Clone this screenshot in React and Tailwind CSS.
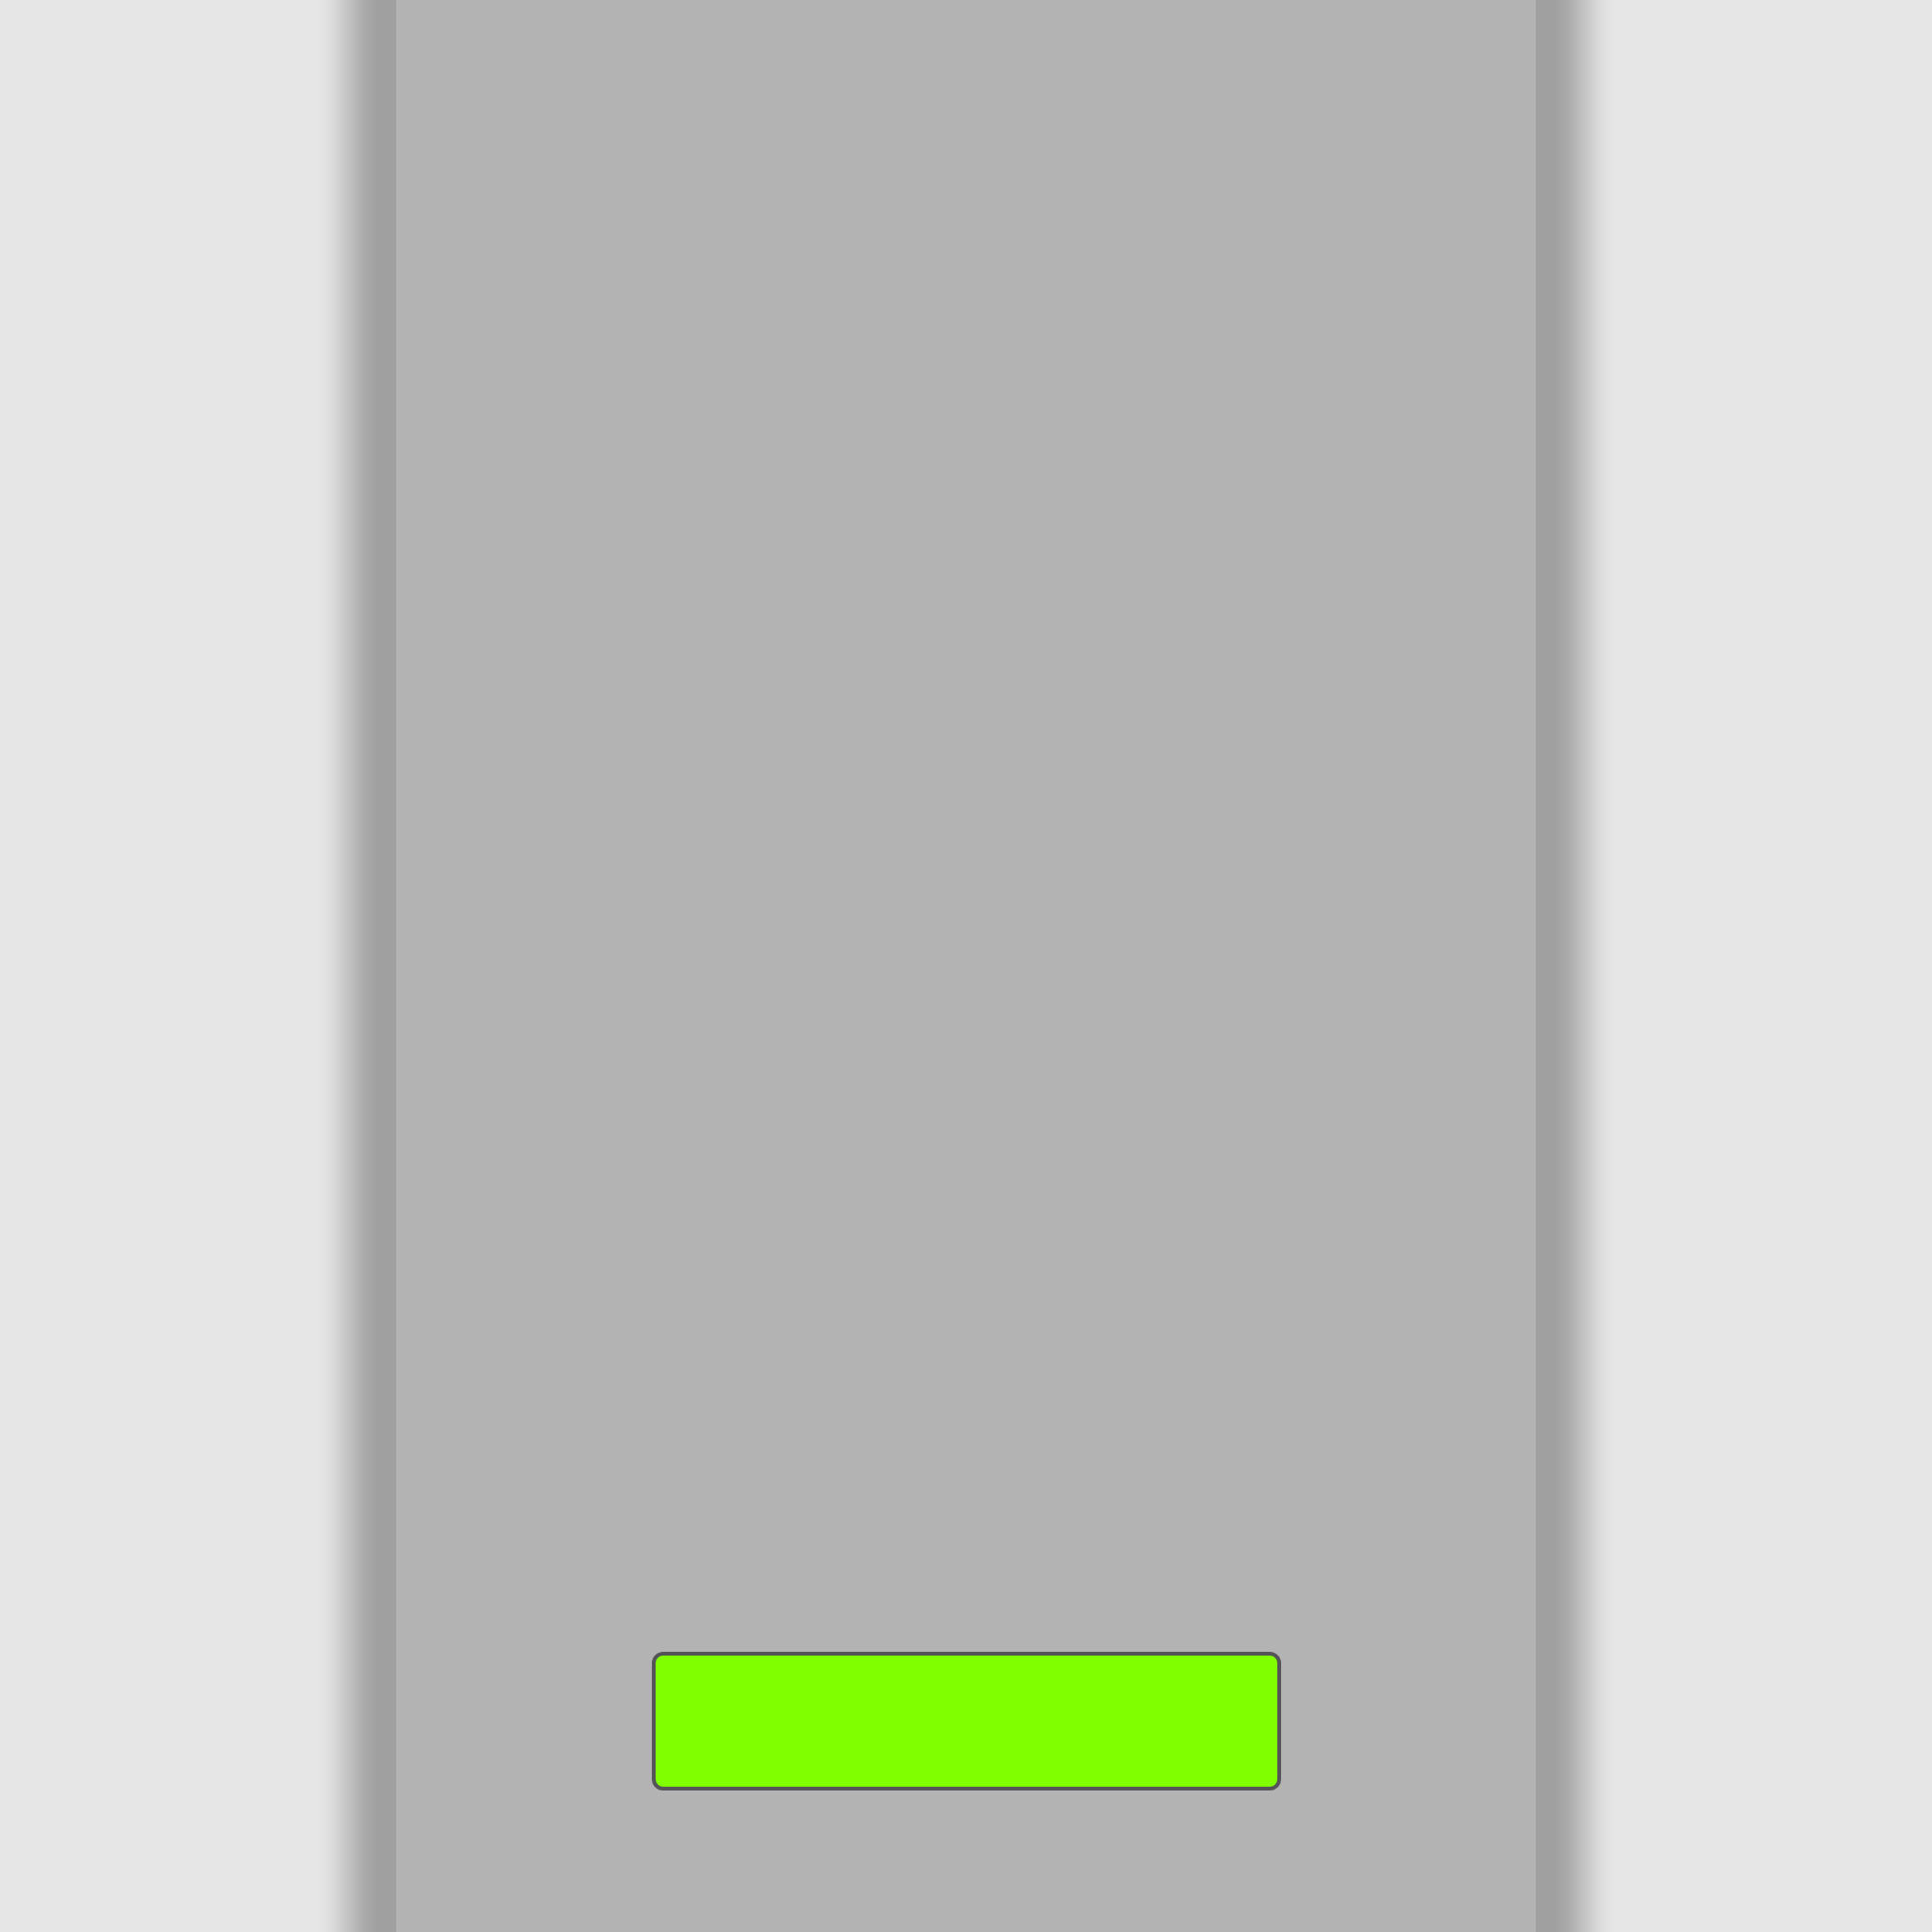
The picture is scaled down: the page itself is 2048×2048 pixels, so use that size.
import React from "react";

export default function App() {
  return (
    <div className="w-[2048px] h-[2048px] bg-[#e6e6e6] flex justify-center overflow-hidden">
      <div className="w-[1372px] h-full px-[82px] bg-[linear-gradient(to_right,rgba(160,160,160,0)_0px,rgba(160,160,160,0.15)_14px,rgba(160,160,160,0.5)_31px,rgba(160,160,160,0.85)_48px,#a0a0a0_62px,#a0a0a0_calc(100%-62px),rgba(160,160,160,0.85)_calc(100%-48px),rgba(160,160,160,0.5)_calc(100%-31px),rgba(160,160,160,0.15)_calc(100%-14px),rgba(160,160,160,0)_100%)]">
        <div className="h-full bg-[#b3b3b3] flex flex-col justify-end items-center pb-[150px]">
          <button className="w-[667px] h-[147px] bg-[#7fff00] border-[4px] border-[#545459] rounded-[12px]"></button>
        </div>
      </div>
    </div>
  );
}
